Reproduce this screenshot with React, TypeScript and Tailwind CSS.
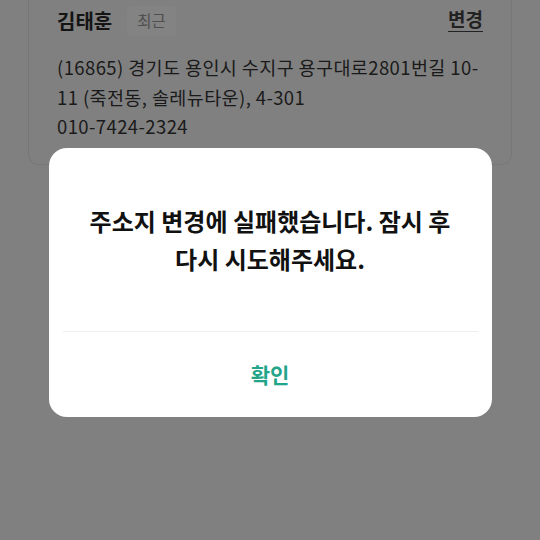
import React from 'react';

const font = { fontFamily: '"Noto Sans CJK KR", "Noto Sans", sans-serif' };

const AddressCard: React.FC = () => {
  return (
    <div className="mx-[28px] border-x border-b border-[#777777] rounded-b-[10px] px-[28px] pt-[6px] pb-[22px]">
      <div className="flex justify-between">
        <div className="flex items-center">
          <span className="text-[20px] font-bold leading-[30px] text-[#141414]">김태훈</span>
          <span className="ml-[15px] h-[30px] px-[10px] flex items-center rounded-[4px] bg-[#838383] text-[15.5px] leading-none text-[#505050]">
            최근
          </span>
        </div>
        <button className="self-start text-[19px] font-semibold leading-[20px] mt-[3px] text-[#222222] underline underline-offset-[4px]">
          변경
        </button>
      </div>
      <div className="mt-[17px] text-[18.5px] leading-[29.5px] tracking-[0.4px] text-[#1a1a1a]">
        <p>(16865) 경기도 용인시 수지구 용구대로2801번길 10-11 (죽전동, 솔레뉴타운), 4-301</p>
        <p>010-7424-2324</p>
      </div>
    </div>
  );
};

const AlertDialog: React.FC = () => {
  return (
    <div className="fixed inset-0 flex justify-center pt-[148px]">
      <div className="w-[443px] h-[269px] bg-white rounded-[18px] flex flex-col">
        <div className="flex-1 px-[32px] pt-[54px] text-center text-[24px] font-semibold leading-[38px] text-[#111111]">
          주소지 변경에 실패했습니다. 잠시 후 다시 시도해주세요.
        </div>
        <div className="mx-[14px] h-px bg-[#efefef]" />
        <button className="h-[85px] flex items-center justify-center text-[21px] font-bold text-[#22a58a]">
          확인
        </button>
      </div>
    </div>
  );
};

export default function App() {
  return (
    <div style={font} className="relative w-[540px] h-[540px] overflow-hidden bg-[#808080]">
      <AddressCard />
      <AlertDialog />
    </div>
  );
}
